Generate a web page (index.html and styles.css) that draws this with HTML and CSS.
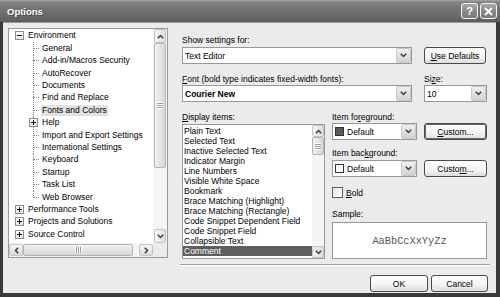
FILE: index.html
```html
<!DOCTYPE html>
<html>
<head>
	<meta charset="UTF-8">
	<title>Options</title>
	<link rel="stylesheet" href="styles.css">
</head>
<body>
<div class="window">
	<div class="titlebar">
		<span class="title">Options</span>
		<div class="caption-btns">
			<span class="cap-btn">?</span>
			<span class="cap-btn"><svg width="9" height="9" viewBox="0 0 9 9"><path d="M1 1L8 8M8 1L1 8" stroke="#fff" stroke-width="1.8" fill="none"/></svg></span>
		</div>
	</div>
	<div class="client">
		<!-- category tree -->
		<div class="tree">
			<div class="tree-view">
				<div class="node"><span class="box"></span><span class="txt">Environment</span></div>
				<div class="node child"><span class="line"></span><span class="txt">General</span></div>
				<div class="node child"><span class="line"></span><span class="txt">Add-in/Macros Security</span></div>
				<div class="node child"><span class="line"></span><span class="txt">AutoRecover</span></div>
				<div class="node child"><span class="line"></span><span class="txt">Documents</span></div>
				<div class="node child"><span class="line"></span><span class="txt">Find and Replace</span></div>
				<div class="node child"><span class="line"></span><span class="txt selected">Fonts and Colors</span></div>
				<div class="node child"><span class="line"><span class="box plus"></span></span><span class="txt">Help</span></div>
				<div class="node child"><span class="line"></span><span class="txt">Import and Export Settings</span></div>
				<div class="node child"><span class="line"></span><span class="txt">International Settings</span></div>
				<div class="node child"><span class="line"></span><span class="txt">Keyboard</span></div>
				<div class="node child"><span class="line"></span><span class="txt">Startup</span></div>
				<div class="node child"><span class="line"></span><span class="txt">Task List</span></div>
				<div class="node child"><span class="line last"></span><span class="txt">Web Browser</span></div>
				<div class="node"><span class="box plus"></span><span class="txt">Performance Tools</span></div>
				<div class="node"><span class="box plus"></span><span class="txt">Projects and Solutions</span></div>
				<div class="node"><span class="box plus"></span><span class="txt">Source Control</span></div>
			</div>
			<div class="vscroll">
				<span class="sb-btn"><svg width="7" height="5" viewBox="0 0 7 5"><path d="M0.8 4.2L3.5 1.5L6.2 4.2" fill="none" stroke="#3c3c3c" stroke-width="1.5"/></svg></span>
				<span class="thumb tree-thumb"><span class="grip"></span></span>
				<span class="track"></span>
				<span class="sb-btn"><svg width="7" height="5" viewBox="0 0 7 5"><path d="M0.8 0.8L3.5 3.5L6.2 0.8" fill="none" stroke="#3c3c3c" stroke-width="1.5"/></svg></span>
			</div>
			<div class="hscroll">
				<span class="sb-btn"><svg width="5" height="7" viewBox="0 0 5 7"><path d="M4.2 0.8L1.5 3.5L4.2 6.2" fill="none" stroke="#3c3c3c" stroke-width="1.5"/></svg></span>
				<span class="thumb h-thumb"><span class="grip hgrip"></span></span>
				<span class="track"></span>
				<span class="sb-btn"><svg width="5" height="7" viewBox="0 0 5 7"><path d="M0.8 0.8L3.5 3.5L0.8 6.2" fill="none" stroke="#3c3c3c" stroke-width="1.5"/></svg></span>
			</div>
			<div class="corner"></div>
		</div>

		<!-- settings page -->
		<div class="page">
			<div class="row lbl-row">Show settings for:</div>
			<div class="row field-row first">
				<div class="combo wide"><span class="val">Text Editor</span><span class="drop"><svg width="7" height="5" viewBox="0 0 7 5"><path d="M0.8 0.8L3.5 3.5L6.2 0.8" fill="none" stroke="#3c3c3c" stroke-width="1.5"/></svg></span></div>
				<button class="btn defaults"><u>U</u>se Defaults</button>
			</div>
			<div class="row lbl-row second">
				<span class="font-lbl"><u>F</u>ont (bold type indicates fixed-width fonts):</span>
				<span>Si<u>z</u>e:</span>
			</div>
			<div class="row field-row">
				<div class="combo wide"><span class="val bold">Courier New</span><span class="drop"><svg width="7" height="5" viewBox="0 0 7 5"><path d="M0.8 0.8L3.5 3.5L6.2 0.8" fill="none" stroke="#3c3c3c" stroke-width="1.5"/></svg></span></div>
				<div class="combo size"><span class="val">10</span><span class="drop"><svg width="7" height="5" viewBox="0 0 7 5"><path d="M0.8 0.8L3.5 3.5L6.2 0.8" fill="none" stroke="#3c3c3c" stroke-width="1.5"/></svg></span></div>
			</div>

			<div class="lower">
				<div class="list-col">
					<div class="lbl"><u>D</u>isplay items:</div>
					<div class="listbox">
						<div class="items">
							<div class="item">Plain Text</div>
							<div class="item">Selected Text</div>
							<div class="item">Inactive Selected Text</div>
							<div class="item">Indicator Margin</div>
							<div class="item">Line Numbers</div>
							<div class="item">Visible White Space</div>
							<div class="item">Bookmark</div>
							<div class="item">Brace Matching (Highlight)</div>
							<div class="item">Brace Matching (Rectangle)</div>
							<div class="item">Code Snippet Dependent Field</div>
							<div class="item">Code Snippet Field</div>
							<div class="item">Collapsible Text</div>
							<div class="item active">Comment</div>
						</div>
						<div class="vscroll list-scroll">
							<span class="sb-btn"><svg width="7" height="5" viewBox="0 0 7 5"><path d="M0.8 4.2L3.5 1.5L6.2 4.2" fill="none" stroke="#3c3c3c" stroke-width="1.5"/></svg></span>
							<span class="thumb list-thumb"><span class="grip"></span></span>
							<span class="track"></span>
							<span class="sb-btn"><svg width="7" height="5" viewBox="0 0 7 5"><path d="M0.8 0.8L3.5 3.5L6.2 0.8" fill="none" stroke="#3c3c3c" stroke-width="1.5"/></svg></span>
						</div>
					</div>
				</div>
				<div class="attr-col">
					<div class="lbl">Item fo<u>r</u>eground:</div>
					<div class="attr-row">
						<div class="combo color"><span class="swatch dark"></span><span class="val">Default</span><span class="drop"><svg width="7" height="5" viewBox="0 0 7 5"><path d="M0.8 0.8L3.5 3.5L6.2 0.8" fill="none" stroke="#3c3c3c" stroke-width="1.5"/></svg></span></div>
						<button class="btn custom focused"><u>C</u>ustom...</button>
					</div>
					<div class="lbl gap">Item bac<u>k</u>ground:</div>
					<div class="attr-row">
						<div class="combo color"><span class="swatch"></span><span class="val">Default</span><span class="drop"><svg width="7" height="5" viewBox="0 0 7 5"><path d="M0.8 0.8L3.5 3.5L6.2 0.8" fill="none" stroke="#3c3c3c" stroke-width="1.5"/></svg></span></div>
						<button class="btn custom">Custo<u>m</u>...</button>
					</div>
					<div class="check-row"><span class="checkbox"></span><span><u>B</u>old</span></div>
					<div class="lbl sample-lbl">Sample:</div>
					<div class="sample">AaBbCcXxYyZz</div>
				</div>
			</div>

			<div class="separator"></div>
			<div class="footer">
				<button class="btn ok">OK</button>
				<button class="btn cancel">Cancel</button>
			</div>
		</div>
	</div>
</div>
</body>
</html>
```

FILE: styles.css
```css
* {
	box-sizing: border-box;
}
body {
	margin: 0;
	background: #fff;
	font-family: "Liberation Sans", Arial, sans-serif;
	font-size: 8.5px;
	color: #000;
}
u {
	text-decoration-thickness: 1px;
	text-underline-offset: 1px;
}
.window {
	width: 500px;
	height: 297px;
	display: flex;
	flex-direction: column;
	background: #3a3a3a;
}
.titlebar {
	height: 22px;
	display: flex;
	align-items: center;
	justify-content: space-between;
	padding: 0 3px 0 7px;
	background: linear-gradient(#a4a4a4 0, #858585 2px, #747474 8px, #6a6a6a 16px, #5c5c5c 22px);
}
.title {
	color: #fff;
	font-weight: bold;
	font-size: 9.5px;
	text-shadow: 1px 1px 0 #4a4a4a;
}
.caption-btns {
	display: flex;
	gap: 2px;
}
.cap-btn {
	width: 17px;
	height: 16px;
	display: flex;
	align-items: center;
	justify-content: center;
	border: 1px solid #f4f4f4;
	border-radius: 3px;
	background: linear-gradient(#a8a8a8, #868686 60%, #7a7a7a);
	color: #fff;
	font-weight: bold;
	font-size: 11px;
}
.client {
	flex: 1;
	display: flex;
	margin: 0 4px 4px 3px;
	padding: 6px 0 0 5px;
	background: #ebebeb;
	border-top: 1px solid #9a9a9a;
}

/* tree */
.tree {
	width: 160px;
	height: 230px;
	border: 1px solid #989898;
	background: #fff;
	display: grid;
	grid-template-columns: 1fr 14px;
	grid-template-rows: 1fr 14px;
	margin-top: -1px;
}
.tree-view {
	padding-top: 0.8px;
	overflow: hidden;
}
.node {
	height: 12.4px;
	display: flex;
	align-items: center;
	white-space: nowrap;
}
.node .box {
	margin: 0 3px 0 6px;
}
.box {
	width: 9px;
	height: 9px;
	border: 1px solid #8e8e8e;
	background: linear-gradient(#fff, #e4e4e4);
	display: grid;
	place-items: center;
	flex: none;
}
.box::before {
	content: '';
	grid-area: 1 / 1;
	width: 5px;
	height: 1px;
	background: #111;
}
.box.plus::after {
	content: '';
	grid-area: 1 / 1;
	width: 1px;
	height: 5px;
	background: #111;
}
.line {
	width: 8px;
	align-self: stretch;
	margin-left: 24px;
	display: flex;
	align-items: center;
	background: repeating-linear-gradient(to bottom, #8a8a8a 0 1px, transparent 1px 2px) 0 0 / 1px 100% no-repeat;
}
.line::before {
	content: '';
	width: 6px;
	border-top: 1px dotted #8a8a8a;
}
.line.last {
	background-size: 1px 50%;
}
.line .box {
	margin: 0 0 0 -4px;
}
.line:has(.box)::before {
	display: none;
}
.txt {
	padding: 0 1px;
	line-height: 11px;
}
.selected {
	background: #e2e2e2;
}

/* scrollbars */
.vscroll {
	display: flex;
	flex-direction: column;
	padding: 0 1px;
	background: #f4f4f4;
}
.hscroll {
	display: flex;
	padding: 1px 0;
	background: #f4f4f4;
}
.corner {
	background: #ebebeb;
}
.sb-btn {
	flex: none;
	width: 12px;
	height: 14px;
	display: flex;
	align-items: center;
	justify-content: center;
	border: 1px solid #c4c4c4;
	border-radius: 2px;
	background: linear-gradient(to right, #f6f6f6, #dcdcdc);
}
.hscroll .sb-btn {
	width: 14px;
	height: 12px;
	background: linear-gradient(#f6f6f6, #dcdcdc);
}
.thumb {
	flex: none;
	display: flex;
	align-items: center;
	justify-content: center;
	border: 1px solid #b4b4b4;
	border-radius: 2px;
	background: linear-gradient(to right, #f2f2f2, #d6d6d6);
}
.tree-thumb {
	height: 125px;
}
.h-thumb {
	width: 110px;
	background: linear-gradient(#f2f2f2, #d6d6d6);
}
.track {
	flex: 1;
}
.grip {
	width: 6px;
	height: 7px;
	background: repeating-linear-gradient(#fff 0 1px, #9c9c9c 1px 2px);
}
.hgrip {
	width: 7px;
	height: 6px;
	background: repeating-linear-gradient(to right, #fff 0 1px, #9c9c9c 1px 2px);
}

/* settings page */
.page {
	width: 306px;
	margin-left: 14px;
	padding-top: 5px;
	display: flex;
	flex-direction: column;
}
.row {
	display: flex;
	white-space: nowrap;
}
.lbl-row {
	height: 12px;
	line-height: 12px;
}
.lbl-row.second {
	margin-top: 10px;
	height: 11px;
	line-height: 11px;
}
.font-lbl {
	width: 242px;
}
.field-row {
	height: 17px;
	gap: 12px;
}
.field-row.first {
	margin-top: 1px;
}
.combo {
	height: 17px;
	border: 1px solid #989898;
	background: #fff;
	display: flex;
	align-items: center;
}
.combo .val {
	flex: 1;
	padding-left: 2px;
	white-space: nowrap;
}
.val.bold {
	font-weight: bold;
}
.drop {
	flex: none;
	width: 15px;
	align-self: stretch;
	display: flex;
	align-items: center;
	justify-content: center;
	border: 1px solid #c8c8c8;
	border-radius: 2px;
	background: linear-gradient(#f0f0f0, #d2d2d2);
}
.combo.wide {
	width: 230px;
}
.combo.size {
	width: 63px;
}
.btn {
	height: 17px;
	padding: 0;
	font: inherit;
	color: #000;
	border: 1px solid #4a4a4a;
	border-radius: 3px;
	background: linear-gradient(#fefefe, #f3f3f3 60%, #dedede);
}
.defaults {
	width: 62px;
}
.focused {
	box-shadow: inset 0 0 0 1px #6a6a6a;
}

.lower {
	margin-top: 10px;
	display: flex;
	gap: 7px;
}
.list-col {
	width: 143px;
}
.lbl {
	height: 11px;
	line-height: 11px;
	white-space: nowrap;
}
.listbox {
	margin-top: 1px;
	height: 135px;
	border: 1px solid #989898;
	background: #fff;
	display: flex;
}
.items {
	flex: 1;
	padding-top: 1px;
}
.item {
	height: 10px;
	line-height: 10px;
	padding-left: 1px;
	white-space: nowrap;
}
.item.active {
	background: #5e5e5e;
	color: #fff;
}
.list-scroll {
	width: 12px;
	padding: 0;
}
.list-scroll .sb-btn {
	width: 12px;
	height: 12px;
}
.list-thumb {
	height: 18px;
}
.attr-col {
	width: 155px;
	display: flex;
	flex-direction: column;
}
.attr-row {
	display: flex;
	gap: 7px;
	height: 17px;
}
.lbl.gap {
	margin-top: 8px;
}
.attr-row + .lbl.gap + .attr-row {
	margin-top: 1px;
}
.combo.color {
	width: 85px;
}
.swatch {
	width: 9px;
	height: 9px;
	margin-left: 2px;
	border: 1px solid #333;
	background: #fff;
	flex: none;
}
.swatch.dark {
	background: #5a5a5a;
}
.combo.color .val {
	padding-left: 3px;
}
.custom {
	width: 63px;
}
.check-row {
	margin-top: 10px;
	height: 11px;
	display: flex;
	align-items: center;
	gap: 3px;
}
.checkbox {
	width: 11px;
	height: 11px;
	border: 1px solid #5e5e5e;
	background: linear-gradient(135deg, #e4e4e4, #fff);
}
.sample-lbl {
	margin-top: 11px;
}
.sample {
	margin-top: 2px;
	height: 37px;
	border: 1px solid #989898;
	background: #fff;
	display: flex;
	align-items: center;
	justify-content: center;
	font-family: "Liberation Mono", "Courier New", monospace;
	font-size: 10.3px;
	color: #555;
}
.separator {
	margin: 5px -2px 0 -2px;
	height: 2px;
	border-top: 1px solid #a0a0a0;
	border-bottom: 1px solid #fff;
}
.footer {
	margin-top: 9px;
	display: flex;
	justify-content: flex-end;
	gap: 3px;
}
.ok {
	width: 58px;
}
.cancel {
	width: 57px;
}
```
